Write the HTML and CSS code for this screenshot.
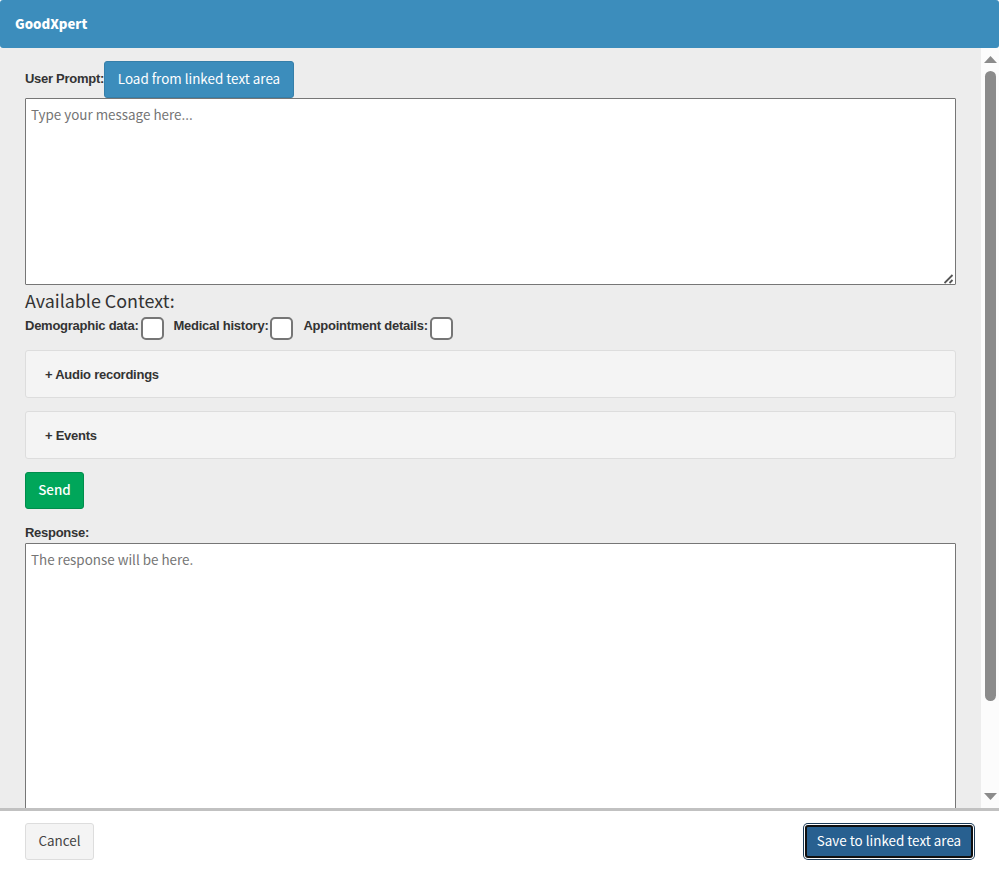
FILE: index.html
```
<!DOCTYPE html>
<html lang="en">
<head>
  <meta charset="UTF-8">
  <meta name="viewport" content="width=device-width, initial-scale=1.0">
  <title>GoodXpert</title>
  <link rel="stylesheet" href="styles.css">
</head>
<body>

<div class="modal">
  <header class="modal-header">
    <h1 class="modal-title">GoodXpert</h1>
  </header>

  <div class="modal-main">
    <div class="modal-body">
      <div class="prompt-row">
        <label for="prompt">User Prompt:</label>
        <button type="button" class="btn btn-primary">Load from linked text area</button>
      </div>
      <div class="prompt-box">
        <textarea id="prompt" class="prompt" placeholder="Type your message here..."></textarea>
        <svg class="grip" width="10" height="10" viewBox="0 0 10 10"><path d="M0.5 9 8.5 1M5.5 9 8.5 6" stroke="#555" stroke-width="1.8" fill="none"/></svg>
      </div>

      <h2 class="context-title">Available Context:</h2>
      <div class="context-row">
        <label for="demographic">Demographic data:</label>
        <input type="checkbox" id="demographic" class="check">
        <label for="history">Medical history:</label>
        <input type="checkbox" id="history" class="check">
        <label for="appointment">Appointment details:</label>
        <input type="checkbox" id="appointment" class="check">
      </div>

      <div class="panel">+ Audio recordings</div>
      <div class="panel">+ Events</div>

      <button type="button" class="btn btn-success">Send</button>

      <label class="response-label" for="response">Response:</label>
      <textarea id="response" class="response" placeholder="The response will be here."></textarea>
    </div>

    <!-- Scrollbar -->
    <div class="scrollbar">
      <svg class="arrow" width="14" height="8" viewBox="0 0 14 8"><path d="M6.5 0 13 7H0Z" fill="#8b8b8b"/></svg>
      <div class="thumb"></div>
      <svg class="arrow arrow-down" width="14" height="8" viewBox="0 0 14 8"><path d="M0 0H13L6.5 7Z" fill="#8b8b8b"/></svg>
    </div>
  </div>

  <footer class="modal-footer">
    <button type="button" class="btn btn-default">Cancel</button>
    <button type="button" class="btn btn-save">Save to linked text area</button>
  </footer>
</div>

</body>
</html>
```

FILE: styles.css
```
:root {
  --primary: #3c8dbc;
  --text: #333;
  --ui-font: "Noto Sans CJK SC", "Noto Sans", sans-serif;
}

* {
  margin: 0;
  padding: 0;
  box-sizing: border-box;
}

body {
  font-family: "Liberation Sans", Arial, sans-serif;
  font-size: 13px;
  color: var(--text);
  background: #fff;
  overflow: hidden;
}

.modal {
  display: flex;
  flex-direction: column;
  height: 100vh;
}

/* Header */
.modal-header {
  height: 48px;
  padding: 0 15px;
  display: flex;
  align-items: center;
  background: var(--primary);
  border-radius: 3px;
  flex-shrink: 0;
}

.modal-title {
  font: 900 13.2px/20px var(--ui-font);
  color: #fff;
}

/* Body */
.modal-main {
  display: flex;
  height: 760px;
  overflow: hidden;
  background: #ededed;
  flex-shrink: 0;
}

.modal-body {
  flex: 1;
  padding: 13px 25px 0;
  overflow: hidden;
}

label {
  font-weight: bold;
  line-height: 20px;
  letter-spacing: -0.28px;
}

.prompt-row {
  display: flex;
  height: 37px;
}

.prompt-row label {
  width: 79px;
  padding-top: 8px;
  white-space: nowrap;
}

textarea {
  display: block;
  width: 100%;
  padding: 5px;
  font: 13.42px/20px var(--ui-font);
  border: 1px solid #767676;
  border-radius: 1px;
  background: #fff;
  outline: none;
  resize: none;
}

textarea::placeholder {
  color: #757575;
}

.prompt-box {
  position: relative;
}

.grip {
  position: absolute;
  right: 2px;
  bottom: 1px;
}

.prompt {
  height: 187px;
}

.response {
  height: 400px;
}

.context-title {
  font: 400 17.9px/22px var(--ui-font);
  margin-top: 4px;
}

.context-row {
  display: flex;
  height: 25px;
  margin: 5px 0 9px;
}

.context-row label {
  letter-spacing: -0.25px;
}

.check {
  appearance: none;
  width: 23px;
  height: 23px;
  margin: 1px 10px 0 2px;
  border: 2px solid #767676;
  border-radius: 5px;
  background: #fff;
}

.panel {
  height: 48px;
  margin-bottom: 13px;
  padding: 0 19px;
  line-height: 47px;
  font-weight: bold;
  letter-spacing: -0.25px;
  background: #f4f4f4;
  border: 1px solid #ddd;
  border-radius: 3px;
}

/* Buttons */
.btn {
  height: 37px;
  padding: 0 12px 3px;
  font: 13.42px/20px var(--ui-font);
  border: 1px solid transparent;
  border-radius: 3px;
  white-space: nowrap;
}

.btn-primary {
  width: 190px;
  color: #fff;
  background: var(--primary);
  border-color: #367fa9;
}

.btn-success {
  display: block;
  width: 59px;
  font-weight: 500;
  color: #fff;
  background: #00a65a;
  border-color: #008d4c;
}

.btn-default {
  width: 69px;
  color: #444;
  background: #f4f4f4;
  border-color: #ddd;
}

.btn-save {
  width: 168px;
  height: 33px;
  margin-right: 1px;
  padding: 0 0 3px;
  color: #fff;
  background: #286090;
  border: 2px solid #101010;
  box-shadow: 0 0 0 1px #fff, 0 0 0 2px #1b3a57;
}

.response-label {
  display: block;
  margin-top: 14px;
}

/* Scrollbar */
.scrollbar {
  width: 18px;
  padding: 8px 0 7px 1px;
  display: flex;
  flex-direction: column;
  align-items: center;
  background: #fcfcfc;
}

.thumb {
  width: 11px;
  height: 630px;
  margin-top: 7px;
  border-radius: 6px;
  background: #8b8b8b;
}

.arrow-down {
  margin-top: auto;
}

/* Footer */
.modal-footer {
  flex: 1;
  display: flex;
  justify-content: space-between;
  align-items: center;
  padding: 0 25px 1px;
  border-top: 3px solid #c1c1c1;
}
```
